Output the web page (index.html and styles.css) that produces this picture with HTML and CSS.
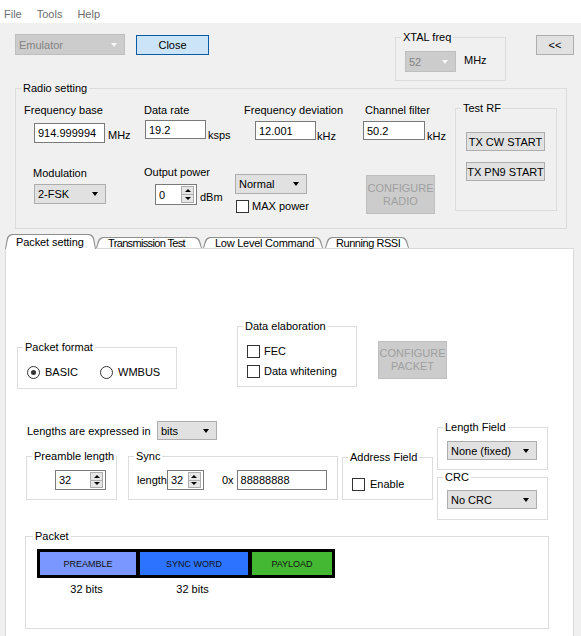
FILE: index.html
```html
<!DOCTYPE html>
<html>
<head>
<meta charset="utf-8">
<title>Radio</title>
<link rel="stylesheet" href="styles.css">
</head>
<body>
<div class="menubar"><span class="m-file">File</span><span class="m-tools">Tools</span><span class="m-help">Help</span></div>

<div class="toprow">
  <div class="combo disabled emu"><span>Emulator</span><i class="arrow"></i></div>
  <div class="btn focus close">Close</div>
  <fieldset class="group xtal"><legend>XTAL freq</legend>
    <div class="xtal-body">
      <div class="combo disabled xcombo"><span>52</span><i class="arrow"></i></div>
      <span class="unit u-xmhz">MHz</span>
    </div>
  </fieldset>
  <div class="btn back">&lt;&lt;</div>
</div>

<fieldset class="group radioset"><legend>Radio setting</legend>
  <div class="rs-body">
    <div class="col c1">
      <div class="lbl l-fb">Frequency base</div>
      <div class="field f-fb"><div class="textbox tb-fb">914.999994</div><span class="unit u-mhz">MHz</span></div>
      <div class="lbl l-mod">Modulation</div>
      <div class="combo mod"><span>2-FSK</span><i class="arrow"></i></div>
    </div>
    <div class="col c2">
      <div class="lbl">Data rate</div>
      <div class="field f-dr"><div class="textbox tb-dr">19.2</div><span class="unit u-ksps">ksps</span></div>
      <div class="lbl l-op">Output power</div>
      <div class="field f-op">
        <div class="spin sp-op"><span class="val">0</span><span class="spbtns"><span class="sb"><i class="tri up"></i></span><span class="sb"><i class="tri dn"></i></span></span></div>
        <span class="unit u-dbm">dBm</span>
      </div>
    </div>
    <div class="col c3">
      <div class="lbl l-fd">Frequency deviation</div>
      <div class="field f-fd"><div class="textbox tb-fd">12.001</div><span class="unit u-khz1">kHz</span></div>
      <div class="combo normal"><span>Normal</span><i class="arrow"></i></div>
      <span class="chk maxp"><i class="cb"></i><span>MAX power</span></span>
    </div>
    <div class="col c4">
      <div class="lbl l-cf">Channel filter</div>
      <div class="field f-cf"><div class="textbox tb-cf">50.2</div><span class="unit u-khz2">kHz</span></div>
      <div class="btn disabled cfg-radio">CONFIGURE<br>RADIO</div>
    </div>
    <fieldset class="group testrf"><legend>Test RF</legend>
      <div class="gbody trf-body">
        <div class="btn trf">TX CW START</div>
        <div class="btn trf trf2">TX PN9 START</div>
      </div>
    </fieldset>
  </div>
</fieldset>

<div class="tabs">
  <div class="tab sel t1">Packet setting</div>
  <div class="tab t2">Transmission Test</div>
  <div class="tab t3">Low Level Command</div>
  <div class="tab t4">Running RSSI</div>
</div>

<div class="panel">
  <div class="rowA">
    <fieldset class="group pf"><legend>Packet format</legend>
      <div class="gbody pf-body">
        <span class="opt o1"><i class="rb on"></i><span>BASIC</span></span>
        <span class="opt"><i class="rb"></i><span>WMBUS</span></span>
      </div>
    </fieldset>
    <fieldset class="group de"><legend>Data elaboration</legend>
      <div class="gbody de-body">
        <span class="chk"><i class="cb"></i><span>FEC</span></span>
        <span class="chk"><i class="cb"></i><span>Data whitening</span></span>
      </div>
    </fieldset>
    <div class="btn disabled cfg-pkt">CONFIGURE<br>PACKET</div>
  </div>

  <div class="rowB">
    <div class="leftcol">
      <div class="lenrow">
        <span class="len-lbl">Lengths are expressed in</span>
        <div class="combo bits"><span>bits</span><i class="arrow"></i></div>
      </div>
      <div class="fsrow">
        <fieldset class="group pre"><legend>Preamble length</legend>
          <div class="gbody pre-body">
            <div class="spin sp-pre"><span class="val">32</span><span class="spbtns"><span class="sb"><i class="tri up"></i></span><span class="sb"><i class="tri dn"></i></span></span></div>
          </div>
        </fieldset>
        <fieldset class="group sync"><legend>Sync</legend>
          <div class="gbody sync-body">
            <span>length</span>
            <div class="spin sp-sync"><span class="val">32</span><span class="spbtns"><span class="sb"><i class="tri up"></i></span><span class="sb"><i class="tri dn"></i></span></span></div>
            <span class="ox">0x</span>
            <div class="textbox tb-sync">88888888</div>
          </div>
        </fieldset>
        <fieldset class="group addr"><legend>Address Field</legend>
          <div class="gbody addr-body">
            <span class="chk"><i class="cb"></i><span>Enable</span></span>
          </div>
        </fieldset>
      </div>
    </div>
    <div class="rightcol">
      <fieldset class="group lf"><legend>Length Field</legend>
        <div class="gbody lf-body"><div class="combo wide"><span>None (fixed)</span><i class="arrow"></i></div></div>
      </fieldset>
      <fieldset class="group crc"><legend>CRC</legend>
        <div class="gbody crc-body"><div class="combo wide"><span>No CRC</span><i class="arrow"></i></div></div>
      </fieldset>
    </div>
  </div>

  <fieldset class="group pkt"><legend>Packet</legend>
    <div class="gbody pkt-body">
      <div class="bar">
        <div class="seg s-pre">PREAMBLE</div>
        <div class="seg s-sync">SYNC WORD</div>
        <div class="seg s-pay">PAYLOAD</div>
      </div>
      <div class="bitsrow"><span class="b1">32 bits</span><span class="b2">32 bits</span></div>
    </div>
  </fieldset>
</div>
</body>
</html>
```

FILE: styles.css
```css
html, body {
  margin: 0;
  padding: 0;
  height: 100%;
  overflow: hidden;
}
body {
  background: #f0f0f0;
  font-family: "Liberation Sans", Arial, sans-serif;
  font-size: 11px;
  line-height: 14px;
  color: #000;
}

/* menu */
.menubar {
  height: 23px;
  box-sizing: border-box;
  padding-top: 7px;
  background: #fff;
  display: flex;
  color: #6d6d6d;
}
.m-file { margin-left: 4px; }
.m-tools { margin-left: 15px; }
.m-help { margin-left: 15px; }

/* generic controls */
.combo {
  display: flex;
  align-items: center;
  justify-content: space-between;
  box-sizing: border-box;
  background: #e1e1e1;
  border: 1px solid #adadad;
  padding: 0 7px 0 3px;
}
.arrow {
  width: 0;
  height: 0;
  border-left: 3.5px solid transparent;
  border-right: 3.5px solid transparent;
  border-top: 4px solid #000;
}
.combo.disabled {
  background: #cccccc;
  border-color: #bfbfbf;
  color: #838383;
}
.combo.disabled .arrow { border-top-color: #f7f7f7; }

.btn {
  display: flex;
  align-items: center;
  justify-content: center;
  text-align: center;
  box-sizing: border-box;
  background: #e1e1e1;
  border: 1px solid #adadad;
  white-space: nowrap;
}
.btn.focus {
  background: #cce4f7;
  border-color: #0b5aa5;
}
.btn.disabled {
  background: #cccccc;
  border-color: #bfbfbf;
  color: #a0a0a0;
  line-height: 13px;
}

.textbox {
  box-sizing: border-box;
  background: #fff;
  border: 1px solid #7a7a7a;
  padding-left: 3px;
  display: flex;
  align-items: center;
}

.spin {
  box-sizing: border-box;
  background: #fff;
  border: 1px solid #7a7a7a;
  display: flex;
  align-items: stretch;
}
.spin .val {
  flex: 1;
  padding-left: 3px;
  display: flex;
  align-items: center;
}
.spbtns {
  display: flex;
  flex-direction: column;
  width: 13px;
  margin: 1px 2px 1px 0;
}
.sb {
  flex: 1;
  box-sizing: border-box;
  background: #e6e6e6;
  border: 1px solid #adadad;
  display: flex;
  align-items: center;
  justify-content: center;
}
.sb + .sb { border-top: none; }
.tri {
  width: 0;
  height: 0;
  border-left: 3px solid transparent;
  border-right: 3px solid transparent;
}
.tri.up { border-bottom: 3px solid #000; }
.tri.dn { border-top: 3px solid #000; }

.unit { line-height: 14px; }

.chk, .opt {
  display: flex;
  align-items: center;
  height: 13px;
  line-height: 13px;
  white-space: nowrap;
}
.cb {
  width: 13px;
  height: 13px;
  box-sizing: border-box;
  border: 1px solid #333;
  background: #fff;
  margin-right: 4px;
}
.rb {
  width: 13px;
  height: 13px;
  box-sizing: border-box;
  border: 1px solid #333;
  border-radius: 50%;
  background: #fff;
  margin-right: 5px;
  display: flex;
  align-items: center;
  justify-content: center;
}
.rb.on::after {
  content: "";
  width: 5px;
  height: 5px;
  border-radius: 50%;
  background: #333;
}

/* group boxes */
.group {
  margin: 0;
  padding: 0;
  min-width: 0;
  box-sizing: border-box;
  border: 1px solid #dcdcdc;
}
.group legend {
  padding: 0 2px;
  margin-left: 5px;
  line-height: 14px;
  white-space: nowrap;
}

/* top row */
.toprow {
  display: flex;
  align-items: flex-start;
  margin-top: 7px;
}
.emu {
  margin: 4px 0 0 15px;
  width: 110px;
  height: 21px;
}
.close {
  margin: 5px 0 0 11px;
  width: 73px;
  height: 20px;
}
.xtal {
  margin-left: 186px;
  width: 111px;
}
.xtal-body {
  display: flex;
  align-items: flex-start;
  padding: 7px 0 8px 9px;
}
.xcombo {
  width: 51px;
  height: 21px;
}
.u-xmhz { margin: 2px 0 0 8px; }
.back {
  margin: 5px 0 0 30px;
  width: 38px;
  height: 20px;
}

/* radio setting */
.radioset {
  margin-left: 15px;
  width: 552px;
}
.rs-body {
  display: flex;
  align-items: flex-start;
  height: 133px;
}
.col {
  display: flex;
  flex-direction: column;
  align-items: flex-start;
  white-space: nowrap;
}
.c1 { width: 128px; }
.c2 { width: 91px; }
.c3 { width: 128px; }
.c4 { width: 92px; }
.lbl { margin-top: 8px; }
.field { display: flex; align-items: flex-start; }

.l-fb { margin-left: 8px; }
.f-fb { margin: 6px 0 0 18px; }
.tb-fb { width: 71px; height: 20px; }
.u-mhz { margin: 5px 0 0 3px; }
.l-mod { margin: 23px 0 0 17px; }
.mod { margin: 4px 0 0 18px; width: 72px; height: 20px; }

.f-dr { margin: 3px 0 0 1px; }
.tb-dr { width: 61px; height: 19px; }
.u-ksps { margin: 8px 0 0 2px; }
.l-op { margin-top: 23px; }
.f-op { margin: 5px 0 0 11px; }
.sp-op { width: 42px; height: 21px; }
.u-dbm { margin: 6px 0 0 3px; }

.l-fd { margin-left: 9px; }
.f-fd { margin: 4px 0 0 20px; }
.tb-fd { width: 61px; height: 19px; }
.u-khz1 { margin: 8px 0 0 1px; }
.normal { margin-top: 31px; width: 72px; height: 20px; }
.maxp { margin: 6px 0 0 1px; }
.maxp .cb { margin-right: 3px; }

.l-cf { margin-left: 2px; }
.f-cf { margin-top: 4px; }
.tb-cf { width: 62px; height: 19px; }
.u-khz2 { margin: 8px 0 0 2px; }
.cfg-radio { margin: 32px 0 0 3px; width: 69px; height: 39px; }

.testrf {
  margin-top: 6px;
  width: 102px;
}
.trf-body {
  padding: 17px 0 29px 10px;
}
.trf { width: 79px; height: 19px; }
.trf2 { margin-top: 11px; }

/* tabs */
.tabs {
  display: flex;
  align-items: flex-end;
  margin-top: 5px;
  height: 14px;
  position: relative;
  z-index: 1;
}
.tab {
  position: relative;
  z-index: 0;
  box-sizing: border-box;
  height: 11px;
  line-height: 11px;
  padding-top: 1px;
  white-space: nowrap;
  overflow: visible;
}
.tab::before, .tab::after {
  content: "";
  position: absolute;
  z-index: -1;
  clip-path: polygon(0 100%, 2px 4px, 3px 2px, 5px 0.5px, 7px 0, calc(100% - 7px) 0, calc(100% - 5px) 0.5px, calc(100% - 3px) 2px, calc(100% - 2px) 4px, 100% 100%);
}
.tab::before { inset: 0; background: #8f8f8f; }
.tab::after { inset: 1px 1px 0 1px; background: #fff; }
.tab.sel {
  height: 15px;
  line-height: 14px;
  padding-top: 1px;
  margin-bottom: -1px;
}
.t1 { margin-left: 5px; width: 91px; padding-left: 11px; letter-spacing: -0.1px; }
.t2 { width: 106px; padding-left: 12px; letter-spacing: -0.65px; }
.t3 { margin-left: 1px; width: 120px; padding-left: 12px; letter-spacing: -0.25px; }
.t4 { margin-left: 2px; width: 84px; padding-left: 11px; letter-spacing: -0.45px; }

/* panel */
.panel {
  margin-left: 5px;
  width: 569px;
  height: 400px;
  box-sizing: border-box;
  border: 1px solid #d9d9d9;
  background: #fff;
}
.rowA {
  display: flex;
  align-items: flex-start;
  margin-top: 70px;
}
.pf {
  margin: 21px 0 0 11px;
  width: 160px;
}
.pf-body {
  display: flex;
  padding: 12px 0 9px 9px;
}
.o1 { width: 73px; }
.de {
  margin-left: 60px;
  width: 120px;
}
.de-body {
  display: flex;
  flex-direction: column;
  gap: 7px;
  padding: 12px 0 8px 9px;
}
.cfg-pkt {
  margin: 22px 0 0 21px;
  width: 69px;
  height: 38px;
}

.rowB {
  display: flex;
  align-items: flex-start;
  margin-top: 31px;
}
.leftcol { width: 431px; }
.lenrow {
  display: flex;
  align-items: center;
  margin-top: 1px;
}
.len-lbl { margin-left: 21px; width: 130px; white-space: nowrap; }
.bits { width: 60px; height: 19px; }
.fsrow {
  display: flex;
  align-items: flex-start;
  margin-top: 9px;
}
.pre { margin-left: 20px; width: 91px; }
.pre-body { padding: 7px 0 9px 28px; }
.sp-pre { width: 51px; height: 20px; }
.sync { margin-left: 11px; width: 210px; }
.sync-body {
  display: flex;
  align-items: center;
  padding: 7px 0 9px 8px;
}
.sp-sync { width: 37px; height: 20px; }
.ox { margin-left: 18px; }
.tb-sync { margin-left: 3px; width: 90px; height: 20px; }
.addr { margin: 1px 0 0 4px; width: 91px; }
.addr-body { padding: 14px 0 8px 9px; }
.addr-body .cb { margin-right: 5px; }

.rightcol { width: 111px; }
.lf, .crc { width: 111px; }
.lf-body { padding: 7px 0 9px 9px; }
.crc-body { padding: 6px 0 10px 9px; }
.wide { width: 90px; height: 19px; }

.pkt {
  margin: 9px 0 0 19px;
  width: 524px;
}
.pkt legend { margin-left: 7px; }
.pkt-body { padding: 6px 0 32px 11px; }
.bar {
  display: flex;
  width: 298px;
  box-sizing: border-box;
  background: #000;
  border: 3px solid #000;
  gap: 4px;
}
.seg {
  height: 23px;
  display: flex;
  align-items: center;
  justify-content: center;
  font-size: 9px;
  color: #111;
}
.s-pre { width: 96px; background: #7997ff; }
.s-sync { width: 108px; background: #2c74ff; }
.s-pay { width: 80px; background: #44b833; }
.bitsrow {
  display: flex;
  margin-top: 4px;
}
.b1 { width: 99px; text-align: center; }
.b2 { width: 113px; text-align: center; }
```
